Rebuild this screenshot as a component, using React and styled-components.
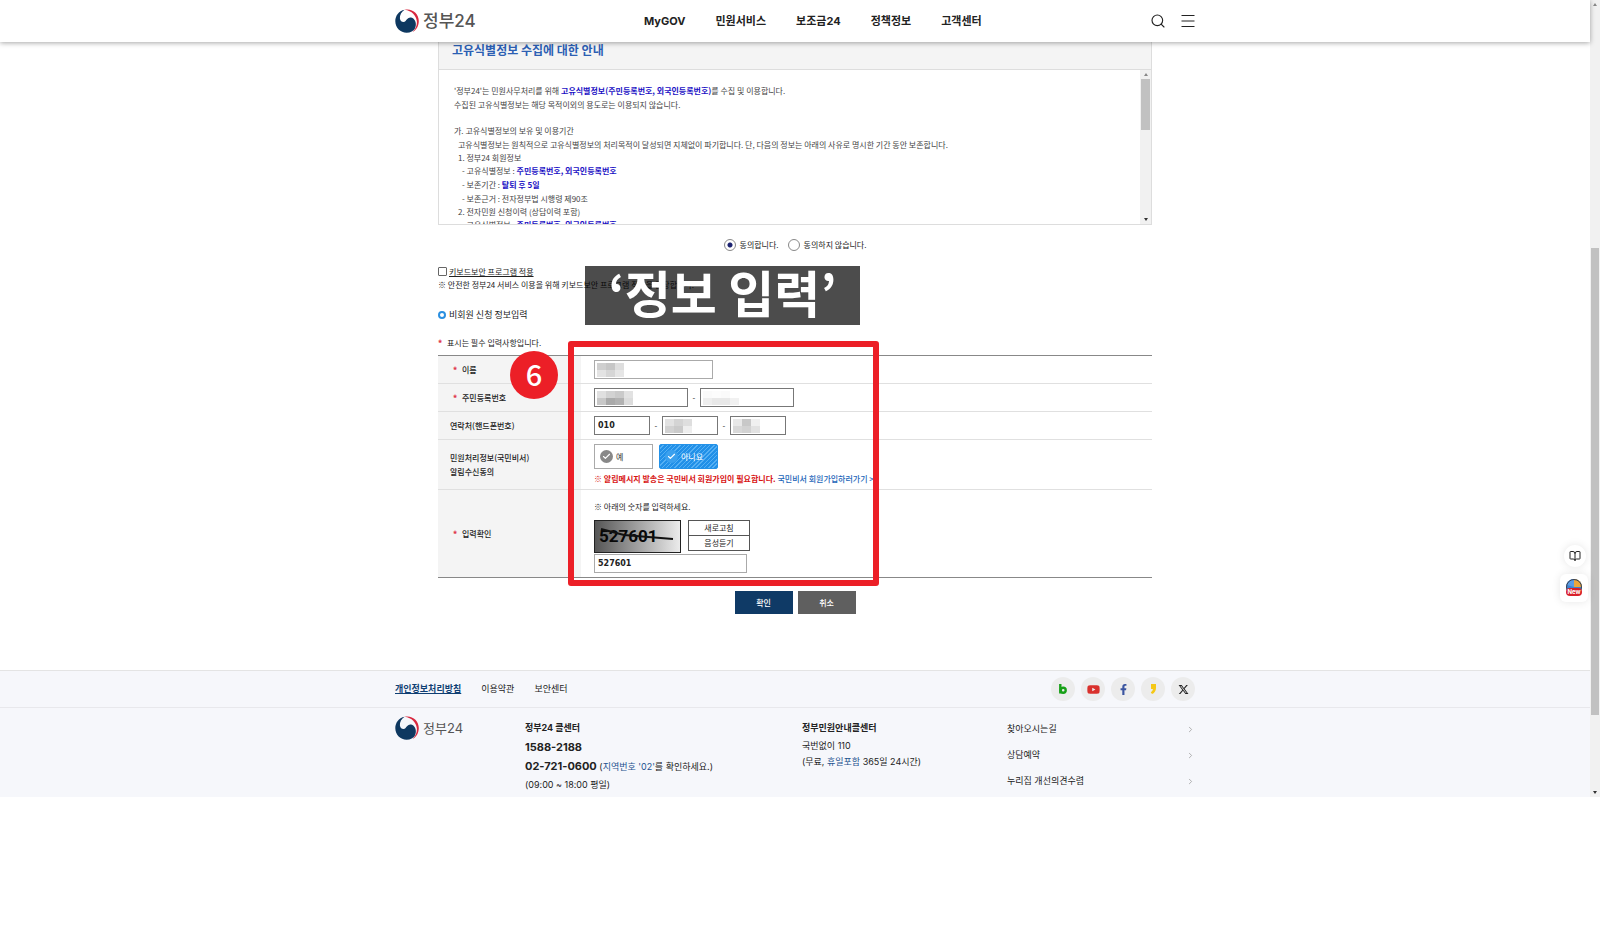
import React from 'react';
import styled, { createGlobalStyle } from 'styled-components';
import { Search, BookOpen, ChevronRight, Check } from 'lucide-react';
import { FaFacebookF, FaYoutube } from 'react-icons/fa';
import { FaXTwitter } from 'react-icons/fa6';

const GlobalStyle = createGlobalStyle`
*, *::before {
    box-sizing: border-box;
}
body {
    margin: 0;
    background: #fff;
    color: #222;
    font-family: Inter, "Noto Sans CJK KR", sans-serif;
    font-size: 8px;
    line-height: 13px;
}
button, input {
    font: inherit;
    color: inherit;
    margin: 0;
}
a {
    color: inherit;
    text-decoration: none;
}
p, h1, h2, h3, ul {
    margin: 0;
    padding: 0;
    list-style: none;
}
`;

const Screen = styled.div`
    display: flex;
    position: relative;
    overflow: hidden;
`;

const Site = styled.div`
    flex: 1;
    min-width: 0;
`;

const Wrap = styled.div`
    width: 100%;
    max-width: 800px;
    margin: 0 auto;
`;

/* header */
const Header = styled.header`
    position: relative;
    z-index: 2;
    background: #fff;
    box-shadow: 0 1px 5px rgba(0, 0, 0, 0.35);
`;

const HeaderInner = styled(Wrap)`
    display: grid;
    grid-template-columns: 249px 1fr auto;
    align-items: center;
    height: 42px;
`;

const LogoLink = styled.a`
    display: flex;
    align-items: center;
    gap: 4px;
    color: #555;
    font-size: ${p => (p.$small ? '13px' : '17px')};
    font-weight: ${p => (p.$small ? 400 : 500)};
    line-height: 24px;
`;

const Nav = styled.nav`
    display: flex;
    gap: 30px;
    font-size: 11px;
    font-weight: 700;
    line-height: 16px;
`;

const Tools = styled.div`
    display: flex;
    align-items: center;
    gap: 15px;
`;

const IconButton = styled.button`
    display: flex;
    padding: 0;
    border: 0;
    background: none;
`;

/* main */
const Content = styled.main`
    position: relative;
    width: 100%;
    max-width: 714px;
    margin: 0 auto;
    padding-bottom: 56px;
    font-family: "Noto Sans CJK KR", sans-serif;
`;

const TermsTitle = styled.h2`
    padding: 0 13px 12px;
    border: 1px solid #ddd;
    border-top: 0;
    background: #f4f4f4;
    color: #2c5fb3;
    font-size: 12px;
    font-weight: 700;
    line-height: 15px;
`;

const TermsBox = styled.div`
    display: flex;
    height: 155px;
    border: 1px solid #ddd;
    border-top: 0;
    overflow: hidden;
`;

const TermsText = styled.div`
    flex: 1;
    padding: 14px 15px 0;
    color: #444;
`;

const Line = styled.p`
    min-height: 13px;
    line-height: ${p => (p.$tall ? '14px' : '13px')};
    padding-left: ${p => p.$indent || 0}px;
    white-space: nowrap;

    strong {
        color: #1a10c4;
    }
`;

const ScrollTrack = styled.div`
    display: flex;
    flex-direction: column;
    align-items: center;
    flex: none;
    width: ${p => p.$width}px;
    background: #f1f1f1;
`;

const ScrollArrow = styled.span`
    height: 9px;
    display: flex;
    align-items: center;

    &::before {
        content: "";
        border: 2px solid transparent;
        border-top: ${p => (p.$down ? '3px solid #333' : '0')};
        border-bottom: ${p => (p.$down ? '0' : '3px solid #888')};
    }
`;

const ScrollSpace = styled.span`
    flex: ${p => p.$grow};
`;

const ScrollThumb = styled.span`
    flex: ${p => p.$grow};
    width: calc(100% - 2px);
    background: #c1c1c1;
`;

const Agree = styled.div`
    display: flex;
    justify-content: center;
    gap: 9px;
    padding: 13px 0 14px;

    label {
        display: flex;
        align-items: center;
        gap: 4px;
    }
`;

const Radio = styled.input`
    appearance: none;
    width: 12px;
    height: 12px;
    border: 1px solid #888;
    border-radius: 50%;
    background: #fff;

    &:checked {
        background: radial-gradient(#1c2370 0 2px, #fff 3px);
    }
`;

const Keyboard = styled.div`
    label {
        display: flex;
        align-items: center;
        gap: 2px;
        text-decoration: underline;
    }
`;

const Checkbox = styled.input`
    appearance: none;
    width: 9px;
    height: 9px;
    border: 1px solid #666;
    border-radius: 1px;
`;

const FormTitle = styled.h3`
    display: flex;
    align-items: center;
    gap: 3px;
    margin: 17px 0 14px;
    font-size: 9px;
    font-weight: 400;
    line-height: 14px;

    &::before {
        content: "";
        width: 8px;
        height: 8px;
        border: 2px solid #2b8fe0;
        border-radius: 50%;
    }
`;

const Star = styled.span`
    display: inline-block;
    width: 9px;
    color: #e0394c;
    font-weight: 900;
`;

const Form = styled.form`
    margin-top: 6px;
`;

const Rows = styled.div`
    border-top: 1px solid #888;
    border-bottom: 1px solid #888;
`;

const Row = styled.div`
    display: grid;
    grid-template-columns: 143px 1fr;

    & + & {
        border-top: 1px solid #e0e0e0;
    }
`;

const RowLabel = styled.label`
    display: flex;
    align-items: center;
    padding-left: ${p => (p.$required ? '15px' : '12px')};
    background: #f4f4f4;
    font-weight: 500;
    line-height: 14px;
`;

const Field = styled.div`
    padding: 4px 13px;
`;

const Inline = styled.div`
    display: flex;
    align-items: ${p => p.$align || 'center'};
    gap: ${p => p.$gap || 0}px;
`;

const Dash = styled.span`
    width: 12px;
    text-align: center;
`;

const InputBox = styled.div`
    position: relative;
    width: ${p => p.$width}px;
    height: 19px;
`;

const TextInput = styled.input`
    display: block;
    width: 100%;
    height: 100%;
    padding: 0 3px;
    border: 1px solid ${p => (p.$dark ? '#777' : '#aaa')};
    background: #fff;
    font-family: "DejaVu Sans", sans-serif;
    font-weight: 700;
`;

const Mosaic = styled.span`
    position: absolute;
    top: 3px;
    left: 3px;
    display: grid;
    grid-template-columns: repeat(4, 9px);
    grid-auto-rows: 7px;
`;

const Cell = styled.i`
    background: ${p => p.$tone};
`;

const Choice = styled.button`
    display: flex;
    align-items: center;
    gap: 3px;
    width: 59px;
    height: 25px;
    padding: 0 5px;
    border: 1px solid ${p => (p.$on ? '#2492e8' : '#aaa')};
    border-radius: ${p => (p.$on ? '2px' : '0')};
    color: ${p => (p.$on ? '#fff' : '#333')};
    background: ${p => (p.$on ? 'repeating-linear-gradient(135deg, #2190e8 0 2px, #55b0f4 2px 3px)' : '#fff')};
`;

const Tick = styled.span`
    display: flex;
    align-items: center;
    justify-content: center;
    width: 13px;
    height: 13px;
    border-radius: 50%;
    color: #fff;
    background: ${p => (p.$on ? '#3ba0ee' : '#888')};
`;

const Notice = styled.p`
    margin-top: 3px;
    color: #d81313;
    font-weight: 700;
    white-space: nowrap;

    a {
        color: #1b65b8;
        font-weight: 500;
    }
`;

const CaptchaField = styled(Field)`
    padding-top: 10px;

    p {
        margin-bottom: 7px;
    }
`;

const CaptchaImage = styled.svg`
    display: block;
    margin-bottom: 1px;
`;

const SmallButton = styled.button`
    display: block;
    width: 62px;
    height: 16px;
    padding: 0;
    border: 1px solid #555;
    background: #fff;
    line-height: 12px;

    & + & {
        border-top: 0;
        height: 15px;
    }
`;

const Actions = styled.div`
    display: flex;
    justify-content: center;
    gap: 5px;
    margin-top: 13px;
`;

const ActionButton = styled.button`
    width: 58px;
    height: 23px;
    padding: 0;
    border: 0;
    color: #fff;
    font-weight: 500;
    background: ${p => (p.$primary ? '#0f3a66' : '#5f5f5f')};
`;

/* guide marks that lie over the form */
const Caption = styled.div`
    position: absolute;
    top: 224px;
    left: 147px;
    width: 275px;
    height: 59px;
    color: #fff;
    background: rgba(0, 0, 0, 0.7);
    font-size: 50px;
    font-weight: 700;
    line-height: 50px;
    text-align: center;
    white-space: nowrap;
`;

const Frame = styled.div`
    position: absolute;
    top: 299px;
    left: 130px;
    width: 311px;
    height: 245px;
    border: 6px solid #ec1f27;
    border-radius: 3px;
    pointer-events: none;
`;

const Step = styled.div`
    position: absolute;
    top: 309px;
    left: 72px;
    width: 48px;
    height: 48px;
    border-radius: 50%;
    color: #fff;
    background: #ec1f27;
    font-size: 29px;
    font-weight: 500;
    line-height: 44px;
    text-align: center;
`;

/* footer */
const Footer = styled.footer`
    border-top: 1px solid #e4e4e4;
    background: #f6f7fb;
    font-size: 9px;
    line-height: 18px;
`;

const FooterBar = styled.div`
    border-bottom: 1px solid #e8e8ec;
`;

const FooterBarInner = styled(Wrap)`
    display: flex;
    align-items: center;
    justify-content: space-between;
    height: 36px;
`;

const PolicyLinks = styled.nav`
    display: flex;
    gap: 20px;

    a:first-child {
        color: #0f3f73;
        font-weight: 700;
        text-decoration: underline;
    }
`;

const Social = styled.a`
    display: flex;
    align-items: center;
    justify-content: center;
    width: 24px;
    height: 24px;
    border-radius: 50%;
    background: #ececec;
    color: ${p => p.$color};
    font-size: ${p => p.$size || 11}px;
`;

const FooterMain = styled(Wrap)`
    display: grid;
    grid-template-columns: 130px 277px 205px 1fr;
    align-items: start;
    padding: 8px 0 3px;
`;

const Contact = styled.div`
    padding-top: 2px;
    line-height: ${p => p.$leading}px;

    h3 {
        font-size: 9px;
        line-height: 20px;
    }
    strong {
        font-size: 11px;
    }
    em {
        color: #1c528f;
        font-style: normal;
    }
`;

const QuickLinks = styled.ul`
    a {
        display: flex;
        align-items: center;
        justify-content: space-between;
        height: 26px;
    }
`;

/* floating buttons */
const Float = styled.button`
    position: absolute;
    right: ${p => p.$right}px;
    top: ${p => p.$top}px;
    display: flex;
    align-items: center;
    justify-content: center;
    width: ${p => p.$size}px;
    height: ${p => p.$size}px;
    padding: 0;
    border: 0;
    border-radius: ${p => p.$radius};
    background: #fff;
    box-shadow: 0 0 8px rgba(0, 0, 0, 0.1);
`;

const Logo = ({ small }) => (
    <LogoLink href="#" $small={small}>
        <svg width="24" height="24" viewBox="0 0 24 24" aria-hidden="true">
            <path fill="#d8283f" d="M9.6.8C17-1 23.8 4.5 23.8 12c0 5-2.5 9-6.3 11 3.3-3.2 4.8-7 4.3-11C21.2 7 17 1.6 9.6.8Z" />
            <path fill="#0e3860" d="M9.6.8C3.6 2 .3 7 .3 12.3.3 18.8 5.5 23.7 11.6 23.7c3.9 0 7-1.7 8.3-4.2 1.9-3.6 1.1-8.9-2.9-10.7-3.5-1.6-5.5 1.8-6.4 3.2C9 14.2 5.3 13 4.9 9.5 4.6 6 6.5 2.8 9.6.8Z" />
        </svg>
        정부24
    </LogoLink>
);

const HiddenInput = ({ id, label, width, dark, tones }) => (
    <InputBox $width={width}>
        <TextInput id={id} aria-label={label} $dark={dark} />
        <Mosaic>
            {tones.map((tone, i) => <Cell key={i} $tone={tone} />)}
        </Mosaic>
    </InputBox>
);

const nav = ['MyGOV', '민원서비스', '보조금24', '정책정보', '고객센터'];
const quick = ['찾아오시는길', '상담예약', '누리집 개선의견수렴'];

const App = () => (
    <>
        <GlobalStyle />
        <Screen>
            <Site>
                <Header>
                    <HeaderInner>
                        <Logo />
                        <Nav>
                            {nav.map(item => <a href="#" key={item}>{item}</a>)}
                        </Nav>
                        <Tools>
                            <IconButton aria-label="검색"><Search size={16} strokeWidth={1.7} /></IconButton>
                            <IconButton aria-label="전체메뉴">
                                <svg width="14" height="12" viewBox="0 0 14 12" stroke="#222">
                                    <path d="M.5 .5h13M.5 6h13M.5 11.500h13" />
                                </svg>
                            </IconButton>
                        </Tools>
                    </HeaderInner>
                </Header>

                <Content>
                    <TermsTitle>고유식별정보 수집에 대한 안내</TermsTitle>
                    <TermsBox>
                        <TermsText>
                            <Line $tall>'정부24'는 민원사무처리를 위해 <strong>고유식별정보(주민등록번호, 외국인등록번호)</strong>를 수집 및 이용합니다.</Line>
                            <Line>수집된 고유식별정보는 해당 목적이외의 용도로는 이용되지 않습니다.</Line>
                            <Line />
                            <Line $tall>가. 고유식별정보의 보유 및 이용기간</Line>
                            <Line $indent={4}>고유식별정보는 원칙적으로 고유식별정보의 처리목적이 달성되면 지체없이 파기합니다. 단, 다음의 정보는 아래의 사유로 명시한 기간 동안 보존합니다.</Line>
                            <Line $indent={4}>1. 정부24 회원정보</Line>
                            <Line $indent={8} $tall>- 고유식별정보 : <strong>주민등록번호, 외국인등록번호</strong></Line>
                            <Line $indent={8} $tall>- 보존기간 : <strong>탈퇴 후 5일</strong></Line>
                            <Line $indent={8}>- 보존근거 : 전자정부법 시행령 제90조</Line>
                            <Line $indent={4}>2. 전자민원 신청이력 (상담이력 포함)</Line>
                            <Line $indent={8} $tall>- 고유식별정보 : <strong>주민등록번호, 외국인등록번호</strong></Line>
                        </TermsText>
                        <ScrollTrack $width={11}>
                            <ScrollArrow />
                            <ScrollThumb $grow={51} />
                            <ScrollSpace $grow={85} />
                            <ScrollArrow $down />
                        </ScrollTrack>
                    </TermsBox>

                    <Agree>
                        <label><Radio type="radio" name="agree" defaultChecked />동의합니다.</label>
                        <label><Radio type="radio" name="agree" />동의하지 않습니다.</label>
                    </Agree>

                    <Keyboard>
                        <label><Checkbox type="checkbox" />키보드보안 프로그램 적용</label>
                        <p>※ 안전한 정부24 서비스 이용을 위해 키보드보안 프로그램 적용을 권장합니다.</p>
                    </Keyboard>

                    <FormTitle>비회원 신청 정보입력</FormTitle>
                    <p><Star>*</Star>표시는 필수 입력사항입니다.</p>

                    <Form onSubmit={e => e.preventDefault()}>
                        <Rows>
                            <Row>
                                <RowLabel htmlFor="name" $required><Star>*</Star>이름</RowLabel>
                                <Field>
                                    <HiddenInput id="name" width={119} tones={['#cfcfcf', '#c6c6c6', '#dedede', '#fff', '#e3e3e3', '#d6d6d6', '#e6e6e6', '#fff']} />
                                </Field>
                            </Row>
                            <Row>
                                <RowLabel htmlFor="rrn" $required><Star>*</Star>주민등록번호</RowLabel>
                                <Field>
                                    <Inline>
                                        <HiddenInput id="rrn" width={94} dark tones={['#e0e0e0', '#d2d2d2', '#cacaca', '#e2e2e2', '#c8c8c8', '#aaa', '#b2b2b2', '#dcdcdc']} />
                                        <Dash>-</Dash>
                                        <HiddenInput label="주민등록번호 뒷자리" width={94} dark tones={['#fafafa', '#fcfcfc', '#fafafa', '#fff', '#eee', '#e8e8e8', '#e8e8e8', '#f1f1f1']} />
                                    </Inline>
                                </Field>
                            </Row>
                            <Row>
                                <RowLabel htmlFor="phone">연락처(핸드폰번호)</RowLabel>
                                <Field>
                                    <Inline>
                                        <InputBox $width={56}><TextInput id="phone" $dark defaultValue="010" /></InputBox>
                                        <Dash>-</Dash>
                                        <HiddenInput label="연락처 가운데자리" width={56} dark tones={['#e2e2e2', '#d4d4d4', '#dedede', '#fff', '#d2d2d2', '#cacaca', '#eee', '#fff']} />
                                        <Dash>-</Dash>
                                        <HiddenInput label="연락처 끝자리" width={56} dark tones={['#e8e8e8', '#c8c8c8', '#f0f0f0', '#fff', '#d8d8d8', '#d2d2d2', '#e2e2e2', '#fff']} />
                                    </Inline>
                                </Field>
                            </Row>
                            <Row>
                                <RowLabel as="div">민원처리정보(국민비서)<br />알림수신동의</RowLabel>
                                <Field>
                                    <Inline $gap={6}>
                                        <Choice type="button"><Tick><Check size={9} strokeWidth={3} /></Tick>예</Choice>
                                        <Choice type="button" $on><Tick $on><Check size={9} strokeWidth={3} /></Tick>아니요</Choice>
                                    </Inline>
                                    <Notice>※ 알림메시지 발송은 국민비서 회원가입이 필요합니다. <a href="#">국민비서 회원가입하러가기 &gt;</a></Notice>
                                </Field>
                            </Row>
                            <Row>
                                <RowLabel htmlFor="captcha" $required><Star>*</Star>입력확인</RowLabel>
                                <CaptchaField>
                                    <p>※ 아래의 숫자를 입력하세요.</p>
                                    <Inline $gap={7} $align="flex-start">
                                        <CaptchaImage width="87" height="33" viewBox="0 0 87 33">
                                            <defs>
                                                <linearGradient id="shade">
                                                    <stop offset="0" stopColor="#555" />
                                                    <stop offset="1" stopColor="#ececec" />
                                                </linearGradient>
                                            </defs>
                                            <rect x=".5" y=".5" width="86" height="32" fill="url(#shade)" stroke="#222" />
                                            <text x="5" y="22" fontFamily="Roboto, sans-serif" fontSize="17" fontWeight="700" fill="#080808">527601</text>
                                            <path d="M7 9 30 15 79 19" fill="none" stroke="#111" strokeWidth="2" />
                                        </CaptchaImage>
                                        <div>
                                            <SmallButton type="button">새로고침</SmallButton>
                                            <SmallButton type="button">음성듣기</SmallButton>
                                        </div>
                                    </Inline>
                                    <InputBox $width={153}><TextInput id="captcha" defaultValue="527601" /></InputBox>
                                </CaptchaField>
                            </Row>
                        </Rows>
                        <Actions>
                            <ActionButton $primary>확인</ActionButton>
                            <ActionButton type="button">취소</ActionButton>
                        </Actions>
                    </Form>

                    <Caption>‘정보 입력’</Caption>
                    <Frame />
                    <Step>6</Step>
                </Content>

                <Footer>
                    <FooterBar>
                        <FooterBarInner>
                            <PolicyLinks>
                                <a href="#">개인정보처리방침</a>
                                <a href="#">이용약관</a>
                                <a href="#">보안센터</a>
                            </PolicyLinks>
                            <Inline $gap={6}>
                                <Social href="#" aria-label="블로그" $color="#17a017">
                                    <svg width="8" height="10" viewBox="0 0 8 10" fill="none" stroke="currentColor" strokeWidth="2.4">
                                        <path d="M1.3 0v9.5" />
                                        <circle cx="4.2" cy="6.3" r="2.5" />
                                    </svg>
                                </Social>
                                <Social href="#" aria-label="유튜브" $color="#d9302c" $size={13}><FaYoutube /></Social>
                                <Social href="#" aria-label="페이스북" $color="#3b55a0"><FaFacebookF /></Social>
                                <Social href="#" aria-label="카카오스토리" $color="#f5c816">
                                    <svg width="7" height="10" viewBox="0 0 7 10" fill="currentColor">
                                        <path d="M1 0h5v4c0 3-1.6 5.2-4 6L.8 8.2C2.2 7.4 2.8 6.4 2.9 5H1Z" />
                                    </svg>
                                </Social>
                                <Social href="#" aria-label="X" $color="#222"><FaXTwitter /></Social>
                            </Inline>
                        </FooterBarInner>
                    </FooterBar>
                    <FooterMain>
                        <Logo small />
                        <Contact $leading={18}>
                            <h3>정부24 콜센터</h3>
                            <p><strong>1588-2188</strong></p>
                            <p><strong>02-721-0600</strong> (<em>지역번호 '02'</em>를 확인하세요.)</p>
                            <p>(09:00 ~ 18:00 평일)</p>
                        </Contact>
                        <Contact $leading={16}>
                            <h3>정부민원안내콜센터</h3>
                            <p>국번없이 110</p>
                            <p>(무료, <em>휴일포함</em> 365일 24시간)</p>
                        </Contact>
                        <QuickLinks>
                            {quick.map(item => (
                                <li key={item}><a href="#">{item}<ChevronRight size={9} color="#999" /></a></li>
                            ))}
                        </QuickLinks>
                    </FooterMain>
                </Footer>
            </Site>

            <ScrollTrack $width={10}>
                <ScrollArrow />
                <ScrollSpace $grow={239} />
                <ScrollThumb $grow={467} />
                <ScrollSpace $grow={73} />
                <ScrollArrow $down />
            </ScrollTrack>

            <Float aria-label="이용안내" $right={14} $top={545} $size={22} $radius="50%">
                <BookOpen size={12} strokeWidth={2} />
            </Float>
            <Float aria-label="New" $right={12} $top={574} $size={28} $radius="6px">
                <svg width="18" height="20" viewBox="0 0 18 20">
                    <circle cx="9" cy="9" r="8" fill="#3c82d0" />
                    <path d="M9 1a8 8 0 0 1 8 8H9Z" fill="#eda63a" />
                    <path d="M9 9V1C5 1 3 4 2 7Z" fill="#5a9ce6" />
                    <circle cx="9" cy="9" r="7.5" fill="none" stroke="#3a4250" />
                    <rect x="1" y="10" width="16" height="8" rx="4" fill="#d8202a" />
                    <text x="9" y="16" fontSize="6" fontWeight="700" fill="#fff" textAnchor="middle">New</text>
                </svg>
            </Float>
        </Screen>
    </>
);

export default App;
